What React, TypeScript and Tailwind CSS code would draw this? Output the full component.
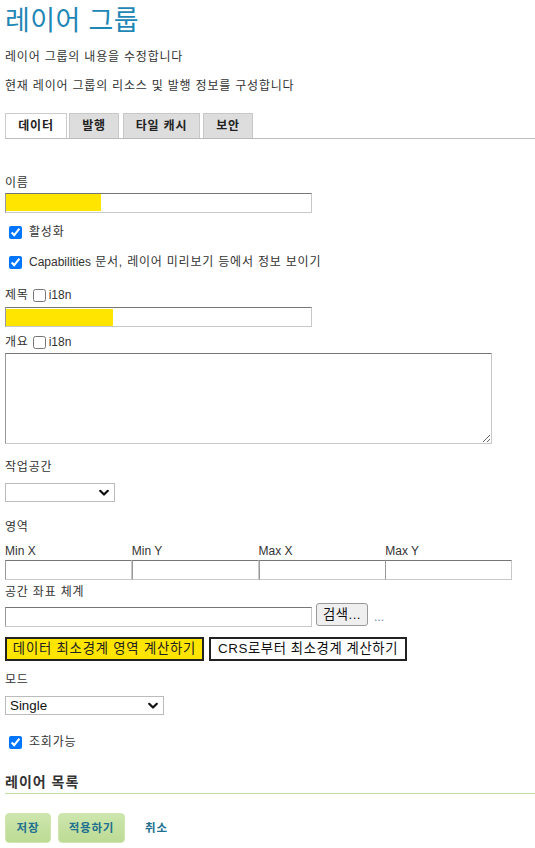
import React from "react";

const Chevron = () => (
  <svg width="10" height="7" viewBox="0 0 10 7" className="pointer-events-none absolute right-[6px] top-1/2 -translate-y-1/2">
    <path d="M1.2 1.2 L5 5 L8.8 1.2" fill="none" stroke="#111" strokeWidth="2.2" strokeLinecap="round" strokeLinejoin="round" />
  </svg>
);

const inputCls =
  "block h-[20px] border border-[#c8c8c8] border-t-[#767676] border-l-[#9a9a9a] bg-white px-[2px] text-[13px] outline-none";

export default function App() {
  return (
    <div className="min-h-[848px] bg-white px-[5px] text-[12px] leading-[16px] tracking-[0.8px] text-[#333] font-['Liberation_Sans','Noto_Sans_CJK_KR',sans-serif]">
      <h1 className="mt-[6px] h-[31px] text-[27px] leading-[31px] tracking-[0.4px] text-[#1f87b5]">
        레이어 그룹
      </h1>
      <p className="mt-[12px] h-[16px]">레이어 그룹의 내용을 수정합니다</p>
      <p className="mt-[13px] h-[16px]">현재 레이어 그룹의 리소스 및 발행 정보를 구성합니다</p>

      <div className="mt-[19px] flex h-[26px] gap-[2px] border-b border-[#bbb] -mr-[5px]">
        <div className="flex h-[25px] w-[62px] items-center justify-center border border-b-0 border-[#ccc] bg-white font-bold text-[#222]">데이터</div>
        <div className="flex h-[25px] w-[50px] items-center justify-center border border-b-0 border-[#c8c8c8] bg-[#ddd] font-bold text-[#222]">발행</div>
        <div className="ml-[2px] flex h-[25px] w-[77px] items-center justify-center border border-b-0 border-[#c8c8c8] bg-[#ddd] font-bold text-[#222]">타일 캐시</div>
        <div className="ml-[1px] flex h-[25px] w-[50px] items-center justify-center border border-b-0 border-[#c8c8c8] bg-[#ddd] font-bold text-[#222]">보안</div>
      </div>

      <div className="mt-[36px] h-[16px]">이름</div>
      <div className="relative mt-[2px] w-[307px]">
        <input className={inputCls + " w-[307px]"} />
        <div className="pointer-events-none absolute left-[1px] top-[1px] h-[17px] w-[95px] bg-[#ffe500]" />
      </div>

      <label className="mt-[11px] flex h-[16px] items-center">
        <input type="checkbox" defaultChecked className="ml-[4px] h-[13px] w-[13px]" />
        <span className="ml-[7px]">활성화</span>
      </label>
      <label className="mt-[14px] flex h-[16px] items-center">
        <input type="checkbox" defaultChecked className="ml-[4px] h-[13px] w-[13px]" />
        <span className="ml-[7px]">
          <span className="tracking-normal">Capabilities</span> 문서, 레이어 미리보기 등에서 정보 보이기
        </span>
      </label>

      <div className="mt-[17px] flex h-[16px] items-center">
        <span>제목</span>
        <input type="checkbox" className="ml-[4px] h-[13px] w-[13px]" />
        <span className="ml-[3px] tracking-normal">i18n</span>
      </div>
      <div className="relative mt-[4px] w-[307px]">
        <input className={inputCls + " w-[307px]"} />
        <div className="pointer-events-none absolute left-[1px] top-[2px] h-[17px] w-[107px] bg-[#ffe500]" />
      </div>

      <div className="mt-[7px] flex h-[16px] items-center">
        <span>개요</span>
        <input type="checkbox" className="ml-[4px] h-[13px] w-[13px]" />
        <span className="ml-[3px] tracking-normal">i18n</span>
      </div>
      <textarea className="mt-[3px] block h-[91px] w-[487px] border border-[#c8c8c8] border-t-[#767676] border-l-[#9a9a9a] bg-white outline-none" />

      <div className="mt-[15px] h-[16px]">작업공간</div>
      <div className="relative mt-[8px] h-[19px] w-[110px]">
        <select className="block h-[19px] w-[110px] appearance-none border border-[#bbb] bg-white px-[3px] text-[13.33px] outline-none">
          <option></option>
        </select>
        <Chevron />
      </div>

      <div className="mt-[17px] h-[16px]">영역</div>
      <div className="mt-[8px] grid w-[507px] grid-cols-4 tracking-normal">
        <div className="h-[16px]">Min X</div>
        <div className="h-[16px]">Min Y</div>
        <div className="h-[16px]">Max X</div>
        <div className="h-[16px]">Max Y</div>
        <input className={inputCls + " mt-[1px] w-[127px]"} />
        <input className={inputCls + " mt-[1px] w-[127px]"} />
        <input className={inputCls + " mt-[1px] w-[127px]"} />
        <input className={inputCls + " mt-[1px] w-[127px]"} />
      </div>

      <div className="mt-[4px] h-[16px]">공간 좌표 체계</div>
      <div className="mt-[3px] flex h-[24px] items-start">
        <input className={inputCls + " mt-[4px] w-[307px]"} />
        <button className="ml-[4px] h-[23px] w-[52px] rounded-[3px] border border-[#999] bg-[#efefef] text-[13.33px] leading-[20px] tracking-[0.5px] text-[#111]">검색...</button>
        <span className="ml-[6px] mt-[6px] tracking-normal text-[#6f8aa3]">...</span>
      </div>

      <div className="mt-[10px] flex h-[24px] gap-[5px]">
        <button className="h-[24px] w-[199px] border-2 border-[#222] bg-[#ffe500] text-[13.33px] leading-[20px] tracking-[0.8px] text-[#222]">데이터 최소경계 영역 계산하기</button>
        <button className="h-[24px] w-[198px] border-2 border-[#222] bg-white text-[13.33px] leading-[20px] tracking-[0.6px] text-[#111]">CRS로부터 최소경계 계산하기</button>
      </div>

      <div className="mt-[11px] h-[16px]">모드</div>
      <div className="relative mt-[8px] h-[19px] w-[159px]">
        <select defaultValue="Single" className="block h-[19px] w-[159px] appearance-none border border-[#bbb] bg-white px-[4px] text-[13.33px] leading-[17px] tracking-normal text-[#111] outline-none">
          <option>Single</option>
          <option>Tiled</option>
        </select>
        <Chevron />
      </div>

      <label className="mt-[19px] flex h-[16px] items-center">
        <input type="checkbox" defaultChecked className="ml-[4px] h-[13px] w-[13px]" />
        <span className="ml-[7px]">조회가능</span>
      </label>

      <h3 className="mt-[23px] -mr-[5px] h-[21px] border-b border-[#c6e0a2] text-[14px] font-bold leading-[18px] tracking-[1px] text-[#333]">레이어 목록</h3>

      <div className="mt-[19px] flex h-[30px] items-center">
        <button className="h-[30px] w-[46px] rounded-[4px] border border-[#cfe6b0] bg-gradient-to-b from-[#cde6ad] to-[#bcdb94] text-[11.5px] font-bold text-[#21708f]">저장</button>
        <button className="ml-[7px] h-[30px] w-[67px] rounded-[4px] border border-[#cfe6b0] bg-gradient-to-b from-[#cde6ad] to-[#bcdb94] text-[11.5px] font-bold text-[#21708f]">적용하기</button>
        <span className="ml-[20px] text-[11.5px] font-bold text-[#21708f]">취소</span>
      </div>
    </div>
  );
}
